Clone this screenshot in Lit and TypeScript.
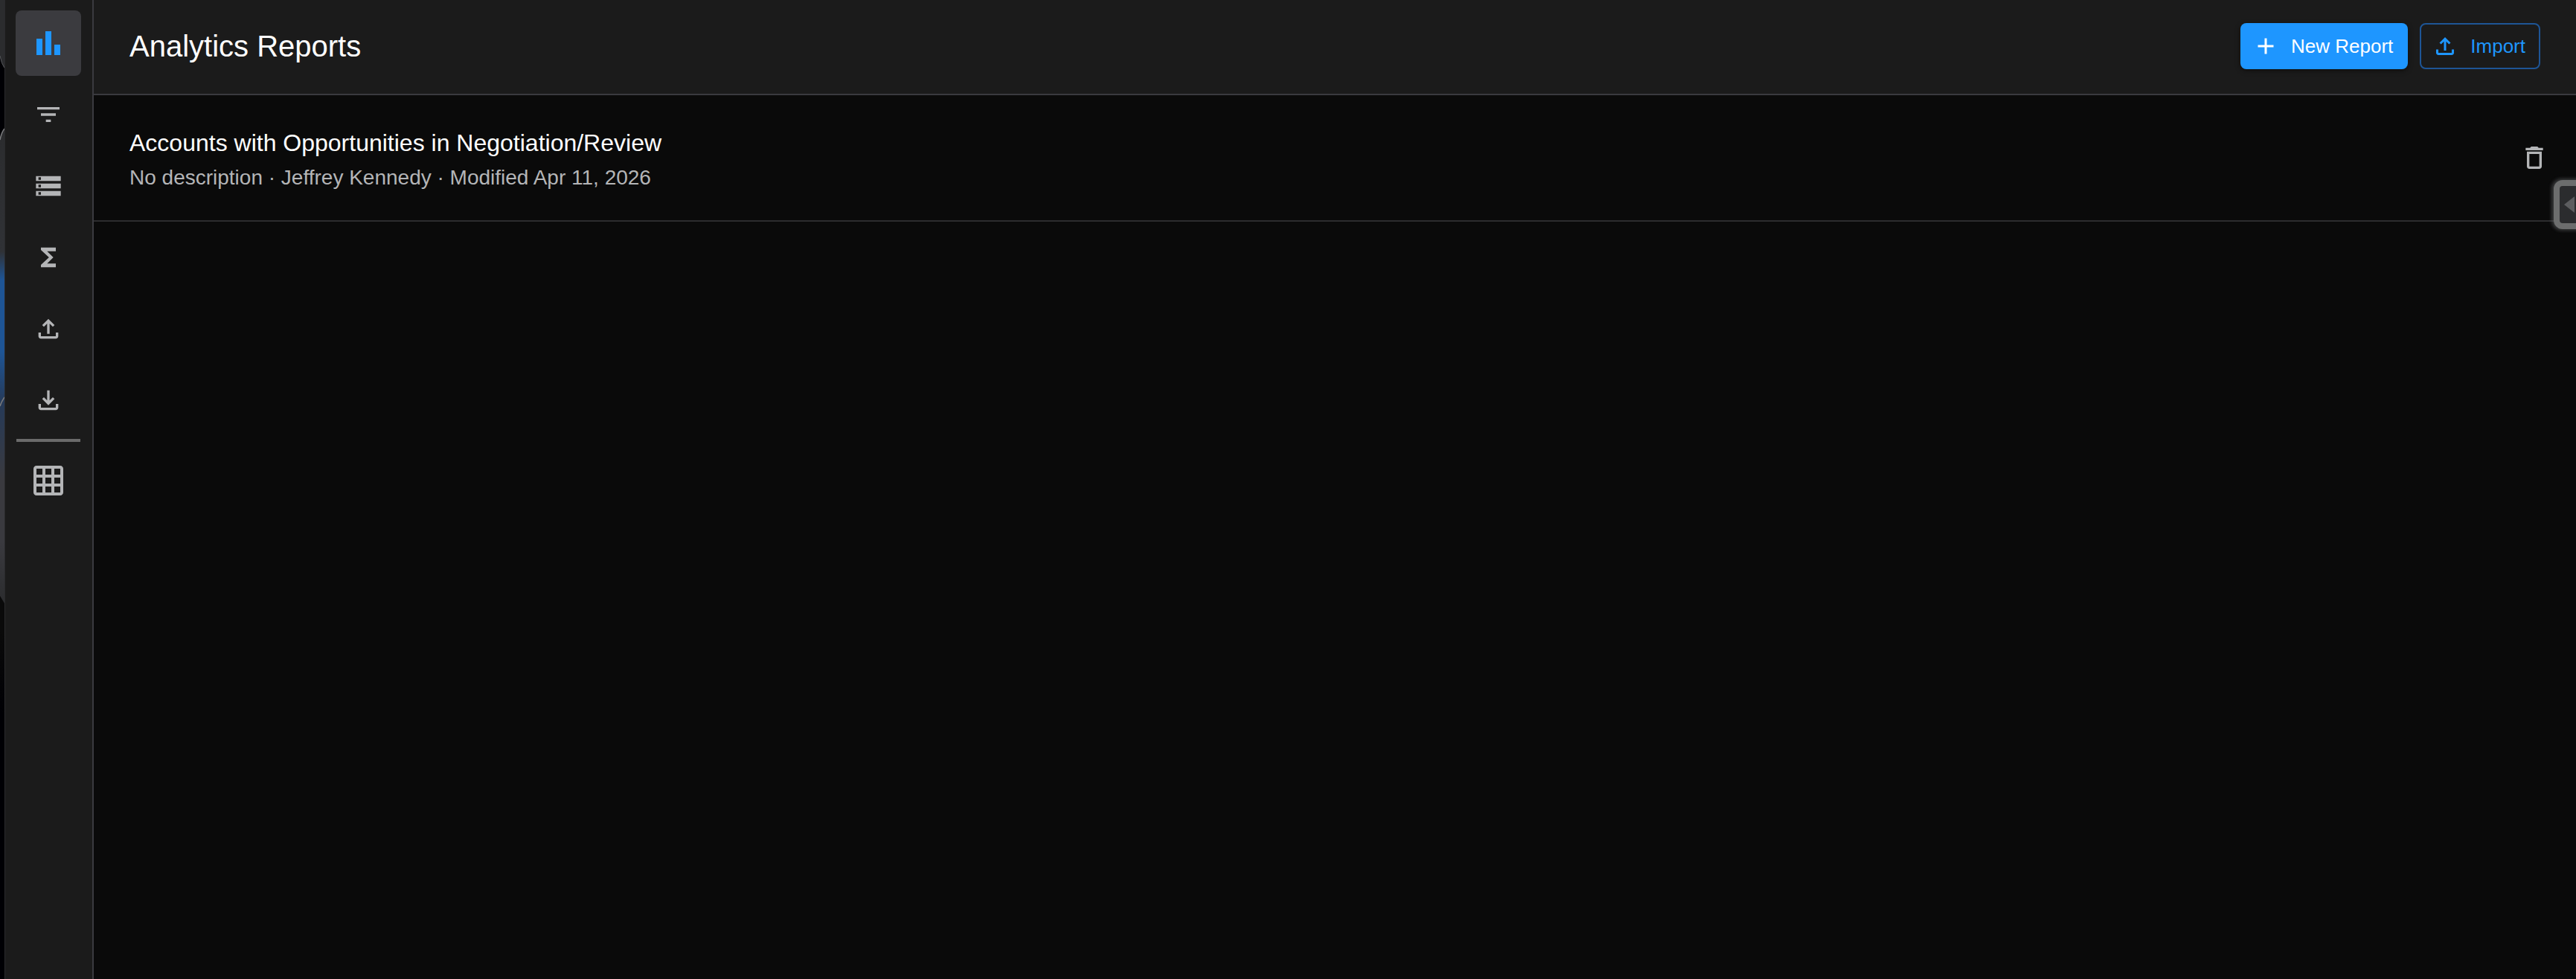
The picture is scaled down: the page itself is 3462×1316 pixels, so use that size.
import { LitElement, html, css, svg } from "lit";
import { customElement, property } from "lit/decorators.js";

const ICONS: Record<string, string> = {
  chart: "M4 9h4v11H4zm12 4h4v7h-4zm-6-9h4v16h-4z",
  filter: "M10 18h4v-2h-4v2zM3 6v2h18V6H3zm3 7h12v-2H6v2z",
  storage:
    "M2 20h20v-4H2v4zm2-3h2v2H4v-2zM2 4v4h20V4H2zm4 3H4V5h2v2zm-4 7h20v-4H2v4zm2-3h2v2H4v-2z",
  sigma: "M18 4H6v2l6.5 6L6 18v2h12v-3h-7l5-5-5-5h7z",
  upload:
    "M18 15v3H6v-3H4v3c0 1.1.9 2 2 2h12c1.1 0 2-.9 2-2v-3h-2zM7 9l1.41 1.41L11 7.83V16h2V7.83l2.59 2.58L17 9l-5-5-5 5z",
  download:
    "M18 15v3H6v-3H4v3c0 1.1.9 2 2 2h12c1.1 0 2-.9 2-2v-3h-2zm-1-4l-1.41-1.41L13 12.17V4h-2v8.17L8.41 9.59 7 11l5 5 5-5z",
  grid:
    "M20 2H4c-1.1 0-2 .9-2 2v16c0 1.1.9 2 2 2h16c1.1 0 2-.9 2-2V4c0-1.1-.9-2-2-2zM8 20H4v-4h4v4zm0-6H4v-4h4v4zm0-6H4V4h4v4zm6 12h-4v-4h4v4zm0-6h-4v-4h4v4zm0-6h-4V4h4v4zm6 12h-4v-4h4v4zm0-6h-4v-4h4v4zm0-6h-4V4h4v4z",
  add: "M19 13h-6v6h-2v-6H5v-2h6V5h2v6h6v2z",
  trash:
    "M6 19c0 1.1.9 2 2 2h8c1.1 0 2-.9 2-2V7H6v12zM8 9h8v10H8V9zm7.5-5l-1-1h-5l-1 1H5v2h14V4h-3.5z",
};

@customElement("app-icon")
export class AppIcon extends LitElement {
  @property() name = "";

  static styles = css`
    :host {
      display: block;
      width: 40px;
      height: 40px;
      flex: none;
    }
    .glyph {
      display: block;
      width: 100%;
      height: 100%;
      fill: currentColor;
    }
  `;

  render() {
    return html`<svg class="glyph" viewBox="0 0 24 24" aria-hidden="true">
      ${svg`<path d=${ICONS[this.name] ?? ""}></path>`}
    </svg>`;
  }
}

interface NavItem {
  icon: string;
  label: string;
  large?: boolean;
  active?: boolean;
}

const NAV: NavItem[] = [
  { icon: "chart", label: "Reports", large: true, active: true },
  { icon: "filter", label: "Filters" },
  { icon: "storage", label: "Data" },
  { icon: "sigma", label: "Formulas" },
  { icon: "upload", label: "Upload" },
  { icon: "download", label: "Download" },
];

const REPORTS = [
  {
    title: "Accounts with Opportunities in Negotiation/Review",
    details: ["No description", "Jeffrey Kennedy", "Modified Apr 11, 2026"],
  },
];

@customElement("app-root")
export class AppRoot extends LitElement {
  static styles = css`
    :host {
      display: flex;
      position: relative;
      box-sizing: border-box;
      min-height: 100vh;
      overflow: hidden;
      background: #0a0a0a;
      color: #fff;
      font-family: "Liberation Sans", Arial, sans-serif;
    }
    .backdrop {
      flex: none;
      width: 6px;
      background: #000004;
    }
    .backdrop-art {
      display: block;
      width: 6px;
      height: 960px;
    }
    .sidebar {
      flex: none;
      box-sizing: border-box;
      width: 120px;
      padding: 14px 15px 14px 14px;
      border-left: 1px solid #2a2a2c;
      border-right: 2px solid #3a3a3f;
      background: #1b1b1b;
      display: flex;
      flex-direction: column;
      align-items: center;
      gap: 8px;
    }
    button {
      font: inherit;
      margin: 0;
      cursor: pointer;
    }
    .nav-item {
      width: 88px;
      height: 88px;
      padding: 0;
      border: 0;
      border-radius: 8px;
      background: transparent;
      color: #b4b5b7;
      display: flex;
      align-items: center;
      justify-content: center;
    }
    .nav-item.active {
      background: #3b3b3f;
      color: #1e96ff;
    }
    .large {
      width: 48px;
      height: 48px;
    }
    .divider {
      width: 86px;
      height: 4px;
      margin: 0;
      border: 0;
      background: #6b6b6b;
    }
    .main {
      flex: 1;
      min-width: 0;
    }
    .header {
      display: flex;
      align-items: center;
      justify-content: space-between;
      box-sizing: border-box;
      height: 128px;
      padding: 0 48px 2px;
      background: #1b1b1b;
      border-bottom: 2px solid #3a3a3f;
    }
    .heading {
      margin: 0;
      font-size: 40px;
      line-height: 48px;
      font-weight: 400;
    }
    .actions {
      display: flex;
      gap: 16px;
    }
    .action {
      display: flex;
      align-items: center;
      gap: 16px;
      box-sizing: border-box;
      height: 62px;
      padding: 0 20px 0 16px;
      border: 0;
      border-radius: 8px;
      font-size: 26px;
      line-height: 46px;
      white-space: nowrap;
    }
    .action app-icon {
      width: 36px;
      height: 36px;
    }
    .primary {
      background: #1e96ff;
      color: #fff;
      box-shadow: 0 2px 6px rgba(0, 0, 0, 0.5);
    }
    .outlined {
      padding: 0 18px 0 14px;
      border: 2px solid #1e5596;
      background: transparent;
      color: #1e96ff;
    }
    .reports {
      list-style: none;
      margin: 0;
      padding: 0;
    }
    .report {
      display: flex;
      align-items: center;
      justify-content: space-between;
      box-sizing: border-box;
      height: 170px;
      padding: 0 36px 0 48px;
      border-bottom: 2px solid #2c2c2e;
    }
    .report-text {
      padding-top: 6px;
    }
    .report-title {
      margin: 0;
      font-size: 32px;
      line-height: 48px;
      font-weight: 400;
    }
    .report-details {
      margin: 0;
      font-size: 28px;
      line-height: 46px;
      color: #b4b5b7;
    }
    .delete {
      display: flex;
      padding: 0;
      border: 0;
      background: transparent;
      color: #b4b5b7;
    }
    .drawer-tab {
      position: absolute;
      right: -36px;
      top: 242px;
      width: 66px;
      height: 66px;
      box-sizing: border-box;
      padding: 0 0 0 6px;
      border: 8px solid #6c6d6d;
      border-radius: 12px;
      background: #2b2c2e;
      box-shadow: -1px 0 4px 2px rgba(110, 112, 116, 0.45);
    }
    .drawer-arrow {
      display: block;
      width: 14px;
      height: 22px;
      fill: #5c5d5f;
    }
  `;

  private navButton(item: NavItem) {
    return html`<button
      class="nav-item ${item.active ? "active" : ""}"
      aria-label=${item.label}
    >
      <app-icon class=${item.large ? "large" : ""} name=${item.icon}></app-icon>
    </button>`;
  }

  render() {
    return html`
      <div class="backdrop">
        <svg class="backdrop-art" viewBox="0 0 6 960" aria-hidden="true">
          <defs>
            <linearGradient id="glow" x1="0" y1="172" x2="0" y2="811" gradientUnits="userSpaceOnUse">
              <stop offset="0" stop-color="#2b2c2e" />
              <stop offset="0.26" stop-color="#303236" />
              <stop offset="0.32" stop-color="#1e5596" />
              <stop offset="0.47" stop-color="#1e5596" />
              <stop offset="0.58" stop-color="#263a58" />
              <stop offset="0.74" stop-color="#3a3a3f" />
              <stop offset="0.87" stop-color="#3a3a3f" />
              <stop offset="1" stop-color="#2b2c2e" />
            </linearGradient>
            <linearGradient id="fade" x1="0" y1="801" x2="0" y2="960" gradientUnits="userSpaceOnUse">
              <stop offset="0" stop-color="#0a0a0a" />
              <stop offset="0.3" stop-color="#0a0a0a" />
              <stop offset="1" stop-color="#000004" />
            </linearGradient>
          </defs>
          <path fill="#2b2c2e" d="M0 0H6V92Q2 86 0 76Z" />
          <path fill="none" stroke="#55565a" d="M0 75Q2 86 6 91" />
          <path fill="url(#fade)" d="M0 795H6V960H0Z" />
          <path fill="url(#glow)" d="M0 188Q2 178 6 173V811L0 801Z" />
          <path fill="none" stroke="#7a7b7d" stroke-width="1.5" d="M0 188Q2 178 6 173M0 546Q2 540 6 534" />
        </svg>
      </div>
      <nav class="sidebar" aria-label="Analytics">
        ${NAV.map((item) => this.navButton(item))}
        <hr class="divider" />
        ${this.navButton({ icon: "grid", label: "Apps", large: true })}
      </nav>
      <main class="main">
        <header class="header">
          <h1 class="heading">Analytics Reports</h1>
          <div class="actions">
            <button class="action primary">
              <app-icon name="add"></app-icon>New Report
            </button>
            <button class="action outlined">
              <app-icon name="upload"></app-icon>Import
            </button>
          </div>
        </header>
        <ul class="reports">
          ${REPORTS.map(
            (report) => html`<li class="report">
              <div class="report-text">
                <h2 class="report-title">${report.title}</h2>
                <p class="report-details">${report.details.join(" · ")}</p>
              </div>
              <button class="delete" aria-label="Delete report">
                <app-icon name="trash"></app-icon>
              </button>
            </li>`,
          )}
        </ul>
      </main>
      <button class="drawer-tab" aria-label="Open panel">
        <svg class="drawer-arrow" viewBox="0 0 14 22" aria-hidden="true">
          <path d="M0 11L14 0V22Z" />
        </svg>
      </button>
    `;
  }
}
